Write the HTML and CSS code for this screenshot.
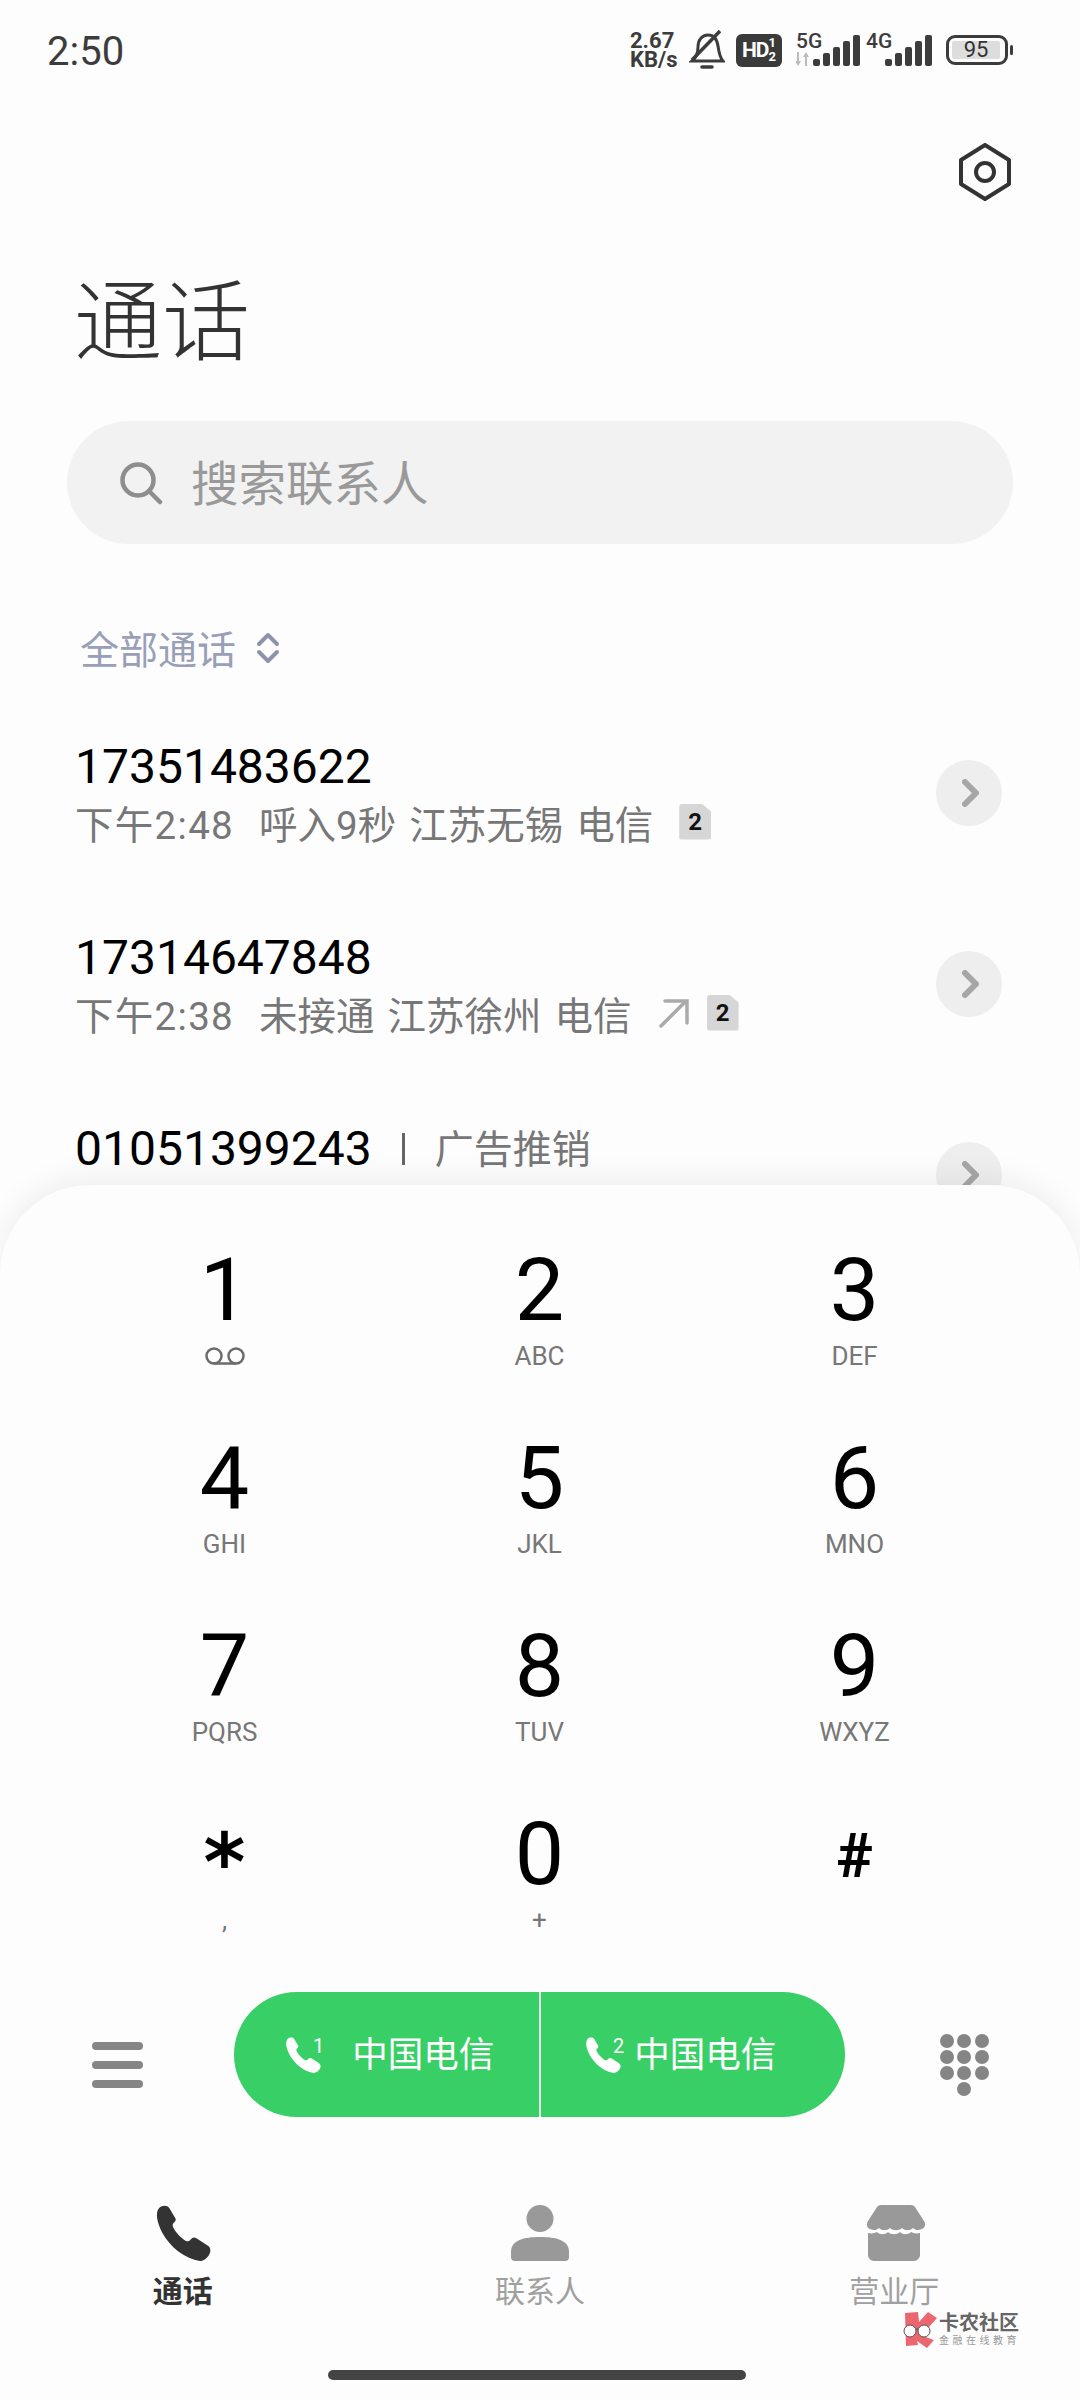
FILE: index.html
```html
<!DOCTYPE html>
<html>
<head>
    <meta charset="utf-8">
    <title>通话</title>
    <link rel="stylesheet" href="styles.css">
</head>
<body>
<div class="screen">
    <div class="top">
        <div class="status">
            <span class="time">2:50</span>
            <div class="status-right">
                <div class="speed"><b>2.67</b><b>KB/s</b></div>
                <svg class="bell" width="36" height="40" viewBox="0 0 36 40" fill="none" stroke="#3c3c3c" stroke-width="3">
                    <path d="M3 31C8 27 9 22 9 17C9 10 13 5 19 5C25 5 28 9 29 16C30 23 31 28 34 31Z"/>
                    <path d="M3 30L31 1" stroke-width="3.500"/>
                    <path d="M13 37h10" stroke-width="3.500" stroke-linecap="round"/>
                </svg>
                <div class="hd"><span class="hd-main">HD</span><span class="hd-nums"><i>1</i><i>2</i></span></div>
                <div class="net net-5g">
                    <span class="net-label">5G</span>
                    <svg class="arrows" width="14" height="14" viewBox="0 0 14 14" fill="#bbb"><path d="M1 0h2v9h2l-3 5-3-5h2zM9 14h2V5h2l-3-5-3 5h2z"/></svg>
                    <div class="bars"><i class="b1"></i><i class="b2"></i><i class="b3"></i><i class="b4"></i><i class="b5"></i></div>
                </div>
                <div class="net">
                    <span class="net-label">4G</span>
                    <div class="bars"><i class="b1"></i><i class="b2"></i><i class="b3"></i><i class="b4"></i><i class="b5"></i></div>
                </div>
                <div class="battery"><div class="battery-body"><span class="battery-fill">95</span></div><i class="battery-nub"></i></div>
            </div>
        </div>

        <div class="toolbar">
            <svg width="54" height="58" viewBox="0 0 54 58" fill="none" stroke="#333" stroke-width="4" stroke-linejoin="round">
                <path d="M27 2l24 15v24L27 56 3 41V17z"/>
                <circle cx="27" cy="29" r="9"/>
            </svg>
        </div>

        <h1 class="title">通话</h1>

        <div class="search">
            <svg width="44" height="44" viewBox="0 0 44 44" fill="none" stroke="#8e8e8e" stroke-width="4.5" stroke-linecap="round">
                <circle cx="19" cy="19" r="15.500"/>
                <path d="M30 30l11 11"/>
            </svg>
            <span>搜索联系人</span>
        </div>

        <div class="filter">
            <span>全部通话</span>
            <svg width="24" height="32" viewBox="0 0 24 32" fill="none" stroke="#8d92ad" stroke-width="4" stroke-linecap="round" stroke-linejoin="round">
                <path d="M3 12l9-9 9 9M3 20l9 9 9-9"/>
            </svg>
        </div>

        <div class="calls">
            <div class="call">
                <div class="call-info">
                    <div class="number">17351483622</div>
                    <div class="meta">
                        <span class="meta-time">下午2:48</span><span>呼入9秒</span><span>江苏无锡</span><span>电信</span>
                        <span class="sim sim-gap">2</span>
                    </div>
                </div>
                <div class="more"><svg width="18" height="28" viewBox="0 0 18 28" fill="none" stroke="#a6a6a6" stroke-width="6" stroke-linecap="round" stroke-linejoin="round"><path d="M3 3l11 11L3 25"/></svg></div>
            </div>
            <div class="call">
                <div class="call-info">
                    <div class="number">17314647848</div>
                    <div class="meta">
                        <span class="meta-time">下午2:38</span><span>未接通</span><span>江苏徐州</span><span>电信</span>
                        <svg class="outgoing" width="30" height="30" viewBox="0 0 30 30" fill="none" stroke="#aaa" stroke-width="3.500" stroke-linecap="round"><path d="M2 28L27 3M6 3h22v22"/></svg>
                        <span class="sim">2</span>
                    </div>
                </div>
                <div class="more"><svg width="18" height="28" viewBox="0 0 18 28" fill="none" stroke="#a6a6a6" stroke-width="6" stroke-linecap="round" stroke-linejoin="round"><path d="M3 3l11 11L3 25"/></svg></div>
            </div>
            <div class="call">
                <div class="call-info">
                    <div class="number-line"><span class="number">01051399243</span><i class="sep"></i><span class="tag">广告推销</span></div>
                    <div class="meta">&nbsp;</div>
                </div>
                <div class="more"><svg width="18" height="28" viewBox="0 0 18 28" fill="none" stroke="#a6a6a6" stroke-width="6" stroke-linecap="round" stroke-linejoin="round"><path d="M3 3l11 11L3 25"/></svg></div>
            </div>
        </div>
    </div>

    <div class="dialer">
        <div class="keys">
            <div class="key"><div class="digit">1</div><div class="letters">
                <svg width="40" height="18" viewBox="0 0 40 18" fill="none" stroke="#6b6b6b" stroke-width="2.500"><circle cx="9" cy="9" r="7.500"/><circle cx="31" cy="9" r="7.500"/><path d="M9 16.500h22"/></svg>
            </div></div>
            <div class="key"><div class="digit">2</div><div class="letters">ABC</div></div>
            <div class="key"><div class="digit">3</div><div class="letters">DEF</div></div>
            <div class="key"><div class="digit">4</div><div class="letters">GHI</div></div>
            <div class="key"><div class="digit">5</div><div class="letters">JKL</div></div>
            <div class="key"><div class="digit">6</div><div class="letters">MNO</div></div>
            <div class="key"><div class="digit">7</div><div class="letters">PQRS</div></div>
            <div class="key"><div class="digit">8</div><div class="letters">TUV</div></div>
            <div class="key"><div class="digit">9</div><div class="letters">WXYZ</div></div>
            <div class="key"><div class="digit digit-sym">*</div><div class="letters">,</div></div>
            <div class="key"><div class="digit">0</div><div class="letters">+</div></div>
            <div class="key"><div class="digit digit-hash">#</div><div class="letters">&nbsp;</div></div>
        </div>

        <div class="actions">
            <div class="menu"><i></i><i></i><i></i></div>
            <div class="dial">
                <div class="dial-btn dial-one">
                    <svg width="36" height="36" viewBox="0 0 55 55" fill="#fff"><path d="M4 3C7 0 12 0 14 3L20 13C21 15 20 16 18 18C17 19 17 21 19 24C23 30 27 33 30 35C32 36 34 36 35 34C37 32 38 31 41 33L52 40C55 42 55 46 53 49C51 52 48 55 44 55C30 53 15 42 7 27C2 17 0 8 4 3Z"/></svg>
                    <sup>1</sup>
                    <span>中国电信</span>
                </div>
                <div class="dial-btn dial-two">
                    <svg width="36" height="36" viewBox="0 0 55 55" fill="#fff"><path d="M4 3C7 0 12 0 14 3L20 13C21 15 20 16 18 18C17 19 17 21 19 24C23 30 27 33 30 35C32 36 34 36 35 34C37 32 38 31 41 33L52 40C55 42 55 46 53 49C51 52 48 55 44 55C30 53 15 42 7 27C2 17 0 8 4 3Z"/></svg>
                    <sup>2</sup>
                    <span>中国电信</span>
                </div>
            </div>
            <div class="pad">
                <i></i><i></i><i></i><i></i><i></i><i></i><i></i><i></i><i></i><i class="pad-last"></i>
            </div>
        </div>

        <div class="tabs">
            <div class="tab tab-on">
                <svg width="56" height="56" viewBox="0 0 55 55" fill="#333"><path d="M4 3C7 0 12 0 14 3L20 13C21 15 20 16 18 18C17 19 17 21 19 24C23 30 27 33 30 35C32 36 34 36 35 34C37 32 38 31 41 33L52 40C55 42 55 46 53 49C51 52 48 55 44 55C30 53 15 42 7 27C2 17 0 8 4 3Z"/></svg>
                <span>通话</span>
            </div>
            <div class="tab">
                <svg width="58" height="56" viewBox="0 0 58 56" fill="#999"><circle cx="29" cy="13.500" r="13.500"/><path d="M0 47c0-12 13-15 29-15s29 3 29 15v5a4 4 0 0 1-4 4H4a4 4 0 0 1-4-4z"/></svg>
                <span>联系人</span>
            </div>
            <div class="tab tab-shop">
                <svg width="62" height="56" viewBox="0 0 62 56" fill="#999"><path d="M14 0h34c2 0 3 1 4 2l9 14c2 3 1 7-2 8-4 2-7 1-9-1-3 3-8 3-11 0-3 3-9 3-12 0-3 3-8 3-11 0-2 2-5 3-9 1-3-1-4-5-2-8l9-14c1-1 2-2 4-2z"/><path d="M5 28c4 1 7 0 9-1 3 3 8 3 11 0 3 3 9 3 12 0 3 3 8 3 11 0 2 1 5 2 9 1v22c0 3-3 6-6 6H11c-3 0-6-3-6-6z"/></svg>
                <span>营业厅</span>
            </div>
        </div>

        <div class="home"></div>
    </div>

    <div class="watermark">
        <svg width="37" height="36" viewBox="0 0 37 36">
            <path d="M5 1L18 0 19 10 28 0 37 6 29 15 20 23 34 28 27 36 17 29 18 33 6 34z" fill="#ec6670"/>
            <path d="M4 17h26" stroke="#555" stroke-width="1"/>
            <circle cx="10" cy="19" r="6" fill="#fff" stroke="#555" stroke-width="1"/>
            <circle cx="24" cy="19" r="6" fill="#fff" stroke="#555" stroke-width="1"/>
        </svg>
        <div class="watermark-text">
            <b>卡农社区</b>
            <span>金融在线教育</span>
        </div>
    </div>
</div>
</body>
</html>
```

FILE: styles.css
```css
* {
    box-sizing: border-box;
}
body {
    margin: 0;
    background: #fdfdfd;
    font-family: Roboto, "Noto Sans CJK SC", sans-serif;
}
i {
    display: block;
    font-style: normal;
}
.screen {
    position: relative;
    width: 1080px;
    height: 2400px;
    overflow: hidden;
    display: flex;
    flex-direction: column;
}
.top {
    height: 1185px;
    overflow: hidden;
    flex-shrink: 0;
}

/* status bar */
.status {
    height: 100px;
    padding: 0 67px 0 47px;
    display: flex;
    justify-content: space-between;
    align-items: center;
}
.time {
    font-size: 40px;
    padding-top: 2px;
    color: #3c3c3c;
}
.status-right {
    display: flex;
    align-items: center;
}
.speed {
    width: 59px;
    display: flex;
    flex-direction: column;
    font-size: 22px;
    line-height: 19px;
    color: #3c3c3c;
}
.speed b {
    font-weight: 700;
}
.hd {
    width: 46px;
    height: 33px;
    margin-left: 11px;
    background: #3a3a3a;
    border-radius: 6px;
    color: #fff;
    display: flex;
    align-items: center;
    justify-content: center;
    font-weight: 700;
}
.hd-main {
    font-size: 21px;
    letter-spacing: -1px;
}
.hd-nums {
    font-size: 13px;
    line-height: 14px;
}
.net {
    position: relative;
    width: 66px;
    height: 32px;
    margin-left: 6px;
    display: flex;
    justify-content: flex-end;
    align-items: flex-end;
}
.net-5g {
    width: 64px;
    margin-left: 14px;
}
.net-label {
    position: absolute;
    left: 0;
    top: -2px;
    font-size: 21px;
    line-height: 18px;
    font-weight: 500;
    color: #3c3c3c;
}
.arrows {
    position: absolute;
    left: 0;
    bottom: 0;
}
.bars {
    display: flex;
    align-items: flex-end;
    gap: 3px;
}
.bars i {
    width: 7px;
    background: #3c3c3c;
    border-radius: 2px;
}
.b1 { height: 7px; }
.b2 { height: 13px; }
.b3 { height: 19px; }
.b4 { height: 25px; }
.b5 { height: 31px; }
.battery {
    margin-left: 14px;
    display: flex;
    align-items: center;
    gap: 2px;
}
.battery-body {
    width: 62px;
    height: 30px;
    border: 3px solid #3c3c3c;
    border-radius: 9px;
    padding: 3px;
}
.battery-fill {
    display: block;
    width: 48px;
    height: 18px;
    background: #ddd;
    border-radius: 2px;
    font-size: 22px;
    line-height: 18px;
    text-align: center;
    color: #333;
}
.battery-nub {
    width: 3px;
    height: 10px;
    background: #3c3c3c;
    border-radius: 2px;
}

/* header */
.toolbar {
    margin-top: 43px;
    height: 58px;
    padding-right: 68px;
    display: flex;
    justify-content: flex-end;
}
.title {
    margin: 72px 0 0 74px;
    font-size: 88px;
    line-height: 100px;
    font-weight: 300;
    color: #333;
}
.search {
    margin: 48px 67px 0;
    height: 123px;
    border-radius: 62px;
    background: #f2f2f2;
    padding-left: 52px;
    display: flex;
    align-items: center;
    gap: 28px;
    font-size: 47.500px;
    color: #999;
}
.search span {
    margin-bottom: 5px;
}
.filter {
    margin: 79px 0 0 80px;
    height: 50px;
    display: flex;
    align-items: center;
    gap: 20px;
    font-size: 39px;
    color: #9a9fb8;
}
.filter span {
    margin-bottom: 3px;
}

/* call log */
.calls {
    margin-top: 24px;
}
.call {
    height: 191px;
    padding: 0 78px 0 75px;
    display: flex;
    justify-content: space-between;
    align-items: center;
}
.number {
    height: 58px;
    font-size: 48px;
    line-height: 64px;
    color: #000;
}
.number-line {
    display: flex;
    align-items: center;
}
.sep {
    width: 3px;
    height: 32px;
    margin: 6px 30px 0 30px;
    background: #666;
}
.tag {
    font-size: 39px;
    color: #777;
}
.meta {
    height: 58px;
    display: flex;
    align-items: center;
    gap: 13px;
    font-size: 38.500px;
    color: #777;
}
.meta-time {
    margin-right: 12px;
    letter-spacing: 1.300px;
}
.sim {
    width: 32px;
    height: 36px;
    background: #d6d6d6;
    border-radius: 3px;
    clip-path: polygon(0 0, 70% 0, 100% 22%, 100% 100%, 0 100%);
    font-size: 24px;
    font-weight: 700;
    line-height: 36px;
    text-align: center;
    color: #111;
}
.sim-gap {
    margin-left: 13px;
}
.outgoing {
    margin-left: 14px;
    margin-right: 5px;
}
.more {
    width: 66px;
    height: 66px;
    border-radius: 50%;
    background: #eee;
    display: flex;
    align-items: center;
    justify-content: center;
    padding-left: 3px;
}

/* dialer */
.dialer {
    flex: 1;
    position: relative;
    z-index: 1;
    background: #fdfdfd;
    border-radius: 90px 90px 0 0;
    box-shadow: 0 -8px 30px rgba(0, 0, 0, 0.06);
    padding-top: 50px;
}
.keys {
    padding: 0 68px 0 67px;
    display: grid;
    grid-template-columns: repeat(3, 315px);
    grid-auto-rows: 188px;
}
.key {
    text-align: center;
}
.digit {
    height: 106px;
    font-size: 88px;
    line-height: 110px;
    color: #000;
}
.digit-sym {
    padding-top: 22px;
    font-family: "DejaVu Sans", sans-serif;
    font-size: 80px;
    line-height: 84px;
    font-weight: 700;
}
.digit-hash {
    padding-top: 8px;
    font-size: 62px;
    line-height: 98px;
    font-weight: 700;
}
.letters {
    height: 30px;
    font-size: 26px;
    line-height: 30px;
    color: #777;
}
.actions {
    height: 125px;
    margin-top: 5px;
    padding-left: 92px;
    display: flex;
    align-items: center;
}
.menu {
    width: 51px;
    margin-top: 20px;
    display: flex;
    flex-direction: column;
    gap: 11px;
}
.menu i {
    height: 8px;
    background: #858585;
    border-radius: 4px;
}
.dial {
    margin-left: 91px;
    width: 611px;
    height: 125px;
    background: #38d066;
    border-radius: 63px;
    display: flex;
    color: #fff;
    font-size: 35.500px;
}
.dial-btn {
    height: 100%;
    display: flex;
    align-items: center;
}
.dial-btn span {
    margin-bottom: 6px;
}
.dial-btn sup {
    align-self: flex-start;
    margin: 44px 0 0 -8px;
    font-size: 20px;
    line-height: 20px;
}
.dial-one {
    width: 307px;
    padding-left: 51px;
    border-right: 2px solid #e6f8ec;
}
.dial-one span {
    margin-left: 28px;
}
.dial-two {
    padding-left: 44px;
}
.dial-two span {
    margin-left: 10px;
}
.pad {
    margin-left: 94px;
    margin-top: 20px;
    width: 50px;
    display: grid;
    grid-template-columns: repeat(3, 14px);
    gap: 2px 3.500px;
    justify-content: center;
}
.pad i {
    width: 14px;
    height: 14px;
    background: #858585;
    border-radius: 50%;
}
.pad-last {
    grid-column: 2;
}
.tabs {
    margin-top: 88px;
    padding: 0 4px;
    display: grid;
    grid-template-columns: repeat(3, 1fr);
}
.tab {
    display: flex;
    flex-direction: column;
    align-items: center;
    gap: 11px;
    font-size: 30px;
    line-height: 40px;
    color: #a0a0a0;
}
.tab-on {
    color: #333;
    font-weight: 700;
}
.tab-shop {
    margin-left: -6px;
}
.home {
    width: 418px;
    height: 10px;
    margin: 58px 0 0 328px;
    background: #444;
    border-radius: 5px;
}

/* watermark sits over the tab bar */
.watermark {
    position: absolute;
    z-index: 2;
    left: 900px;
    top: 2312px;
    display: flex;
    gap: 2px;
}
.watermark-text {
    display: flex;
    flex-direction: column;
    color: #666;
}
.watermark-text b {
    font-size: 20px;
    line-height: 22px;
}
.watermark-text span {
    font-size: 10px;
    line-height: 14px;
    letter-spacing: 3.500px;
    color: #999;
}
```
